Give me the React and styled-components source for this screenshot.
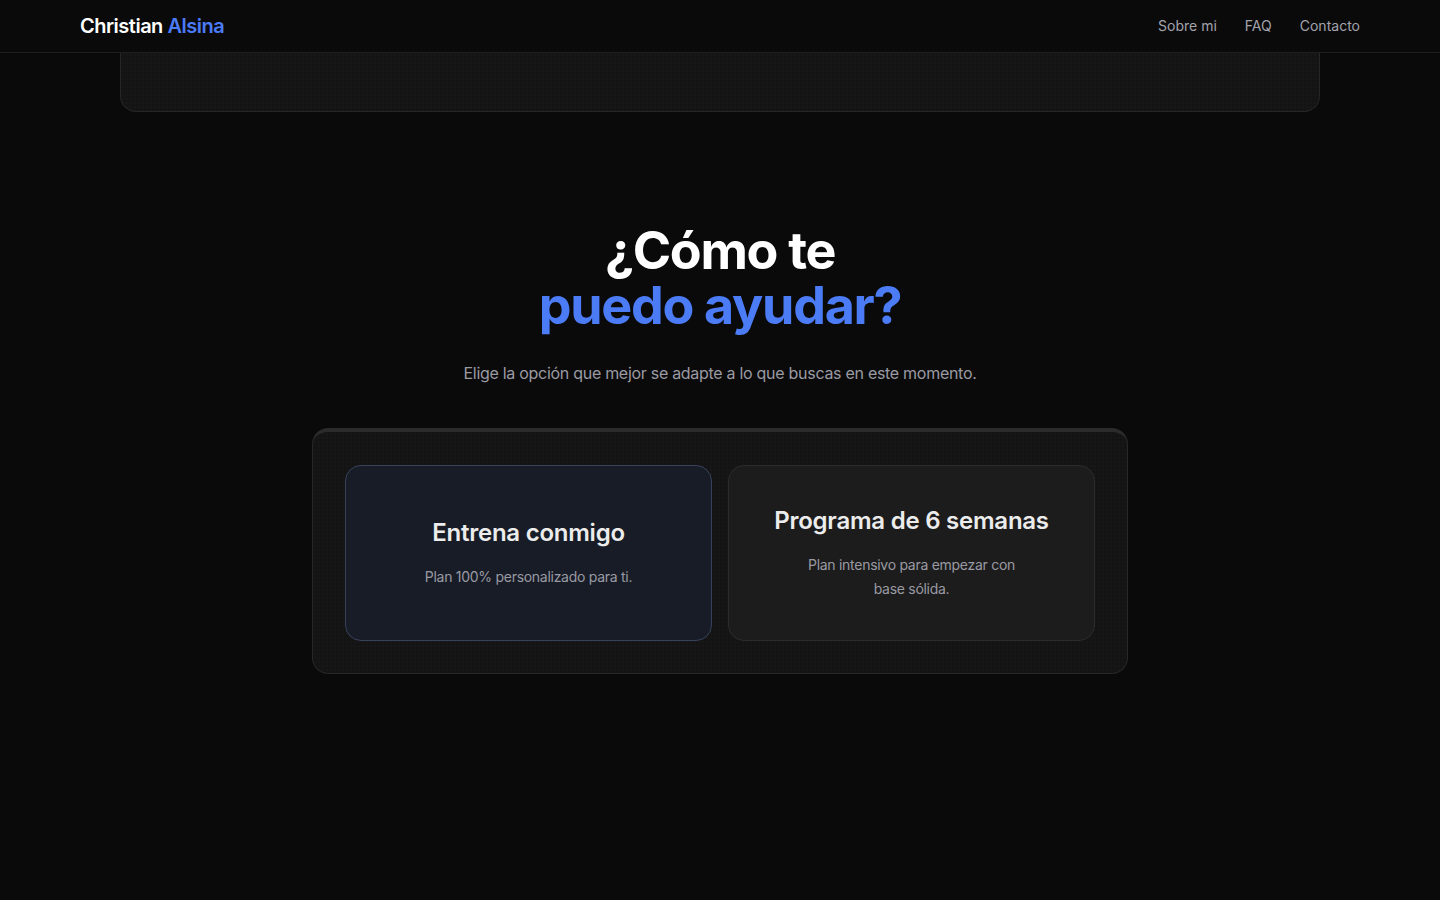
import React from "react";
import styled, { createGlobalStyle } from "styled-components";

const Global = createGlobalStyle`
  * { box-sizing: border-box; }
  html, body { margin: 0; padding: 0; background: #0a0a0a; }
  body {
    font-family: Inter, "Noto Sans", "Liberation Sans", sans-serif;
    color: #f5f5f5;
    -webkit-font-smoothing: antialiased;
  }
`;

const Page = styled.div`
  min-height: 900px;
  background: #0a0a0a;
  display: flex;
  flex-direction: column;
`;

const Header = styled.header`
  height: 53px;
  padding: 0 80px;
  display: flex;
  align-items: center;
  justify-content: space-between;
  border-bottom: 1px solid #1f1f1f;
  background: #0a0a0a;
`;

const Logo = styled.a`
  font-size: 20px;
  font-weight: 600;
  letter-spacing: -0.025em;
  color: #ffffff;
  text-decoration: none;
`;

const Accent = styled.span`
  color: #4b7bf5;
`;

const Nav = styled.nav`
  display: flex;
  gap: 28px;
  padding-bottom: 1px;
`;

const NavLink = styled.a`
  font-size: 14px;
  color: #a3a3ad;
  text-decoration: none;
`;

const dots = `
  background-image: radial-gradient(rgba(255,255,255,0.025) 0.6px, transparent 0.9px);
  background-size: 4px 4px;
`;

const TopPanel = styled.div`
  margin: 0 120px;
  height: 59px;
  background-color: #141414;
  ${dots}
  border: 1px solid #262626;
  border-top: none;
  border-radius: 0 0 16px 16px;
`;

const Section = styled.section`
  display: flex;
  flex-direction: column;
  align-items: center;
  padding-top: 111px;
`;

const Title = styled.h2`
  margin: 0;
  font-size: 52px;
  line-height: 55px;
  font-weight: 700;
  letter-spacing: -0.025em;
  text-align: center;
  color: #ffffff;
`;

const TitleLine = styled.span`
  display: block;
  color: ${(p) => (p.$accent ? "#4b7bf5" : "#ffffff")};
`;

const Lead = styled.p`
  margin: 28px 0 0;
  font-size: 16px;
  line-height: 24px;
  letter-spacing: -0.018em;
  color: #9a9aa3;
  text-align: center;
`;

const Chooser = styled.div`
  margin-top: 43px;
  width: 816px;
  padding: 33px 32px 32px;
  background-color: #141414;
  ${dots}
  border: 1px solid #272727;
  border-top: 4px solid #2b2b2b;
  border-radius: 16px;
  display: grid;
  grid-template-columns: 1fr 1fr;
  gap: 16px;
`;

const Option = styled.button`
  height: 176px;
  border-radius: 16px;
  padding: 24px;
  display: flex;
  flex-direction: column;
  align-items: center;
  justify-content: center;
  gap: 16px;
  font-family: inherit;
  cursor: pointer;
  background: ${(p) => (p.$active ? "#181c26" : "#1c1c1c")};
  border: 1px solid ${(p) => (p.$active ? "#37425c" : "#2c2c2c")};
`;

const OptionTitle = styled.h3`
  margin: 0;
  font-size: 24px;
  line-height: 32px;
  font-weight: 600;
  letter-spacing: -0.01em;
  color: #ececec;
`;

const OptionText = styled.p`
  margin: 0;
  max-width: 230px;
  font-size: 14px;
  line-height: 24px;
  letter-spacing: -0.02em;
  color: #9a9aa3;
  text-align: center;
`;

const options = [
  { title: "Entrena conmigo", text: "Plan 100% personalizado para ti.", active: true },
  { title: "Programa de 6 semanas", text: "Plan intensivo para empezar con base sólida.", active: false },
];

export default function App() {
  return (
    <Page>
      <Global />
      <Header>
        <Logo href="#">
          Christian <Accent>Alsina</Accent>
        </Logo>
        <Nav>
          <NavLink href="#">Sobre mi</NavLink>
          <NavLink href="#">FAQ</NavLink>
          <NavLink href="#">Contacto</NavLink>
        </Nav>
      </Header>
      <TopPanel />
      <Section>
        <Title>
          <TitleLine>¿Cómo te</TitleLine>
          <TitleLine $accent>puedo ayudar?</TitleLine>
        </Title>
        <Lead>Elige la opción que mejor se adapte a lo que buscas en este momento.</Lead>
        <Chooser>
          {options.map((o) => (
            <Option key={o.title} $active={o.active}>
              <OptionTitle>{o.title}</OptionTitle>
              <OptionText>{o.text}</OptionText>
            </Option>
          ))}
        </Chooser>
      </Section>
    </Page>
  );
}
